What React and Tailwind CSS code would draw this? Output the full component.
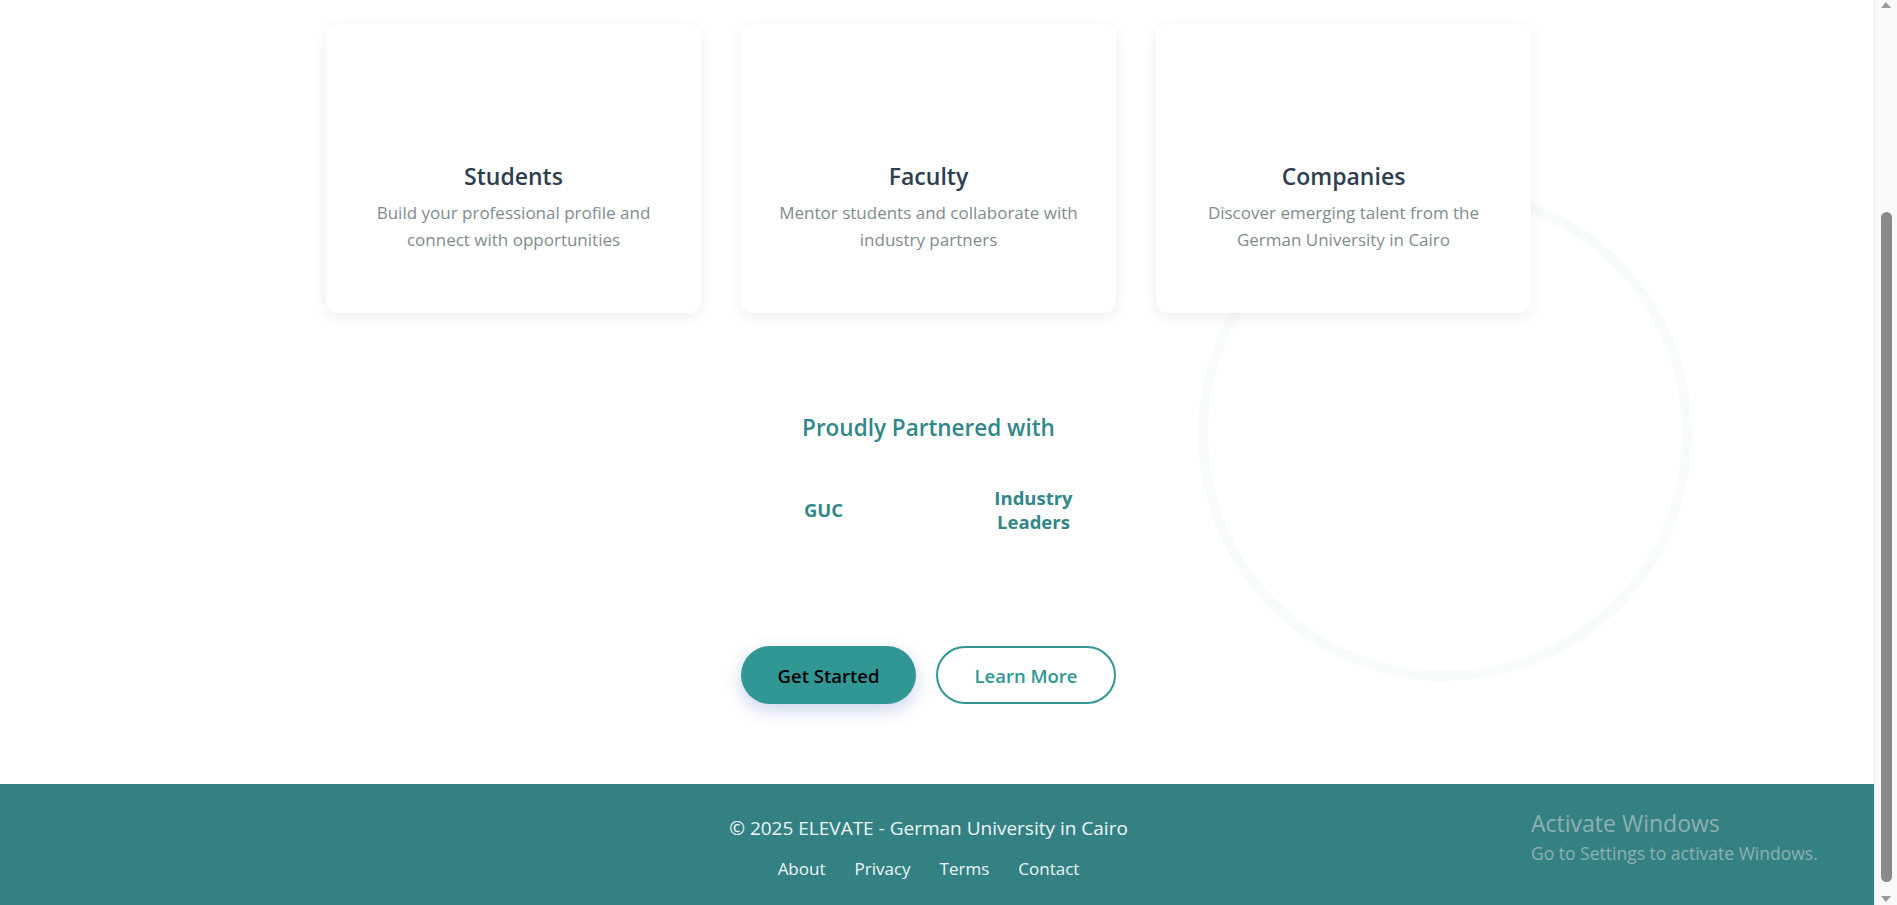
import React from 'react';

const audiences = [
  { title: 'Students', text: ['Build your professional profile and', 'connect with opportunities'] },
  { title: 'Faculty', text: ['Mentor students and collaborate with', 'industry partners'] },
  { title: 'Companies', text: ['Discover emerging talent from the', 'German University in Cairo'] },
];

const links = ['About', 'Privacy', 'Terms', 'Contact'];

const AudienceCard = ({ title, text }) => (
  <div className="flex flex-col items-center rounded-xl bg-white px-6 pt-10 pb-[60px] text-center shadow-[0_4px_16px_rgba(0,0,0,0.07)]">
    {/* icon slot, image not loaded */}
    <div className="mb-[18px] h-[80px] w-[80px]" />
    <h3 className="mb-2 text-[23px] leading-[29px] font-semibold text-[#2c3e50]">{title}</h3>
    <p className="text-[17px] leading-[27px] text-[#7f8c8d]">
      {text[0]}
      <br />
      {text[1]}
    </p>
  </div>
);

const App = () => {
  return (
    <div className="flex h-[905px] w-full overflow-hidden bg-white font-['Open_Sans',sans-serif]">
      <div className="relative flex min-w-0 flex-1 flex-col">
        <section className="relative flex flex-1 flex-col items-center overflow-hidden pt-6 pr-[17px]">
          {/* faint decorative ring behind the cards */}
          <div className="absolute top-[187px] left-[1198px] h-[494px] w-[494px] rounded-full border-[10px] border-[#f7fbfb]" />

          <div className="relative grid w-[1205px] grid-cols-3 gap-10">
            {audiences.map(a => (
              <AudienceCard key={a.title} {...a} />
            ))}
          </div>

          <h2 className="relative mt-[100px] text-[22.5px] leading-[29px] font-semibold text-[#31878a]">
            Proudly Partnered with
          </h2>

          <div className="relative mt-[44px] flex items-center gap-[90px]">
            <div className="w-[120px] text-center text-[18.5px] leading-[24px] font-bold text-[#31878a]">GUC</div>
            <div className="w-[120px] text-center text-[18.5px] leading-[24px] font-bold text-[#31878a]">
              Industry
              <br />
              Leaders
            </div>
          </div>

          <div className="relative mt-[112px] flex items-center gap-5">
            <button className="h-[58px] w-[175px] rounded-full bg-[#319795] pt-[2px] text-[18.5px] font-semibold text-black shadow-[0_6px_18px_rgba(70,100,190,0.28)]">
              Get Started
            </button>
            <button className="h-[58px] w-[180px] rounded-full border-2 border-[#319795] bg-white pt-[2px] text-[18.5px] font-semibold text-[#319795]">
              Learn More
            </button>
          </div>
        </section>

        <footer className="flex h-[121px] flex-col items-center bg-[#348184] pt-[30px] pr-[17px] text-[#eef7f7]">
          <p className="text-[19px] leading-[29px]">© 2025 ELEVATE - German University in Cairo</p>
          <nav className="mt-3 flex gap-[29px] text-[17px] leading-[27px]">
            {links.map(l => (
              <a key={l} href="#" className="hover:underline">{l}</a>
            ))}
          </nav>
        </footer>

        {/* OS activation watermark */}
        <div className="pointer-events-none absolute top-[808px] left-[1531px] text-[#8fb0b1]">
          <p className="text-[23px] leading-[30px]">Activate Windows</p>
          <p className="mt-[3px] text-[17.5px] leading-[24px]">Go to Settings to activate Windows.</p>
        </div>
      </div>

      {/* scrollbar */}
      <div className="flex w-[23px] flex-col items-center border-l border-[#ececec] bg-[#f9f9f9]">
        <div className="mt-[2px] h-0 w-0 border-x-[5px] border-b-[6px] border-x-transparent border-b-[#9a9a9a]" />
        <div className="mt-[204px] h-[670px] w-[11px] rounded-full bg-[#8a8a8a]" />
        <div className="mt-auto mb-[3px] h-0 w-0 border-x-[5px] border-t-[6px] border-x-transparent border-t-[#9a9a9a]" />
      </div>
    </div>
  );
};

export default App;
